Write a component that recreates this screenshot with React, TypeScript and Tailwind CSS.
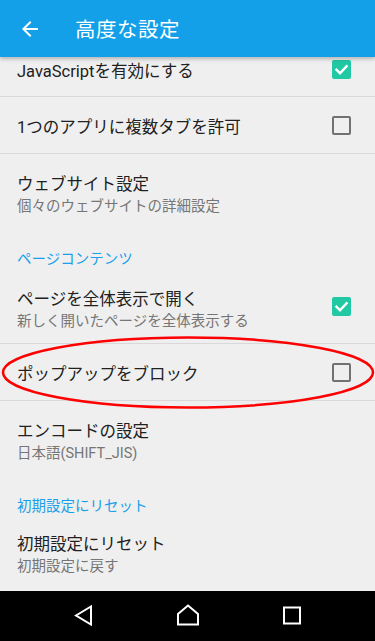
import React from "react";

const font = { fontFamily: 'Roboto, "Noto Sans CJK JP", sans-serif' };

function Checkbox({ checked }: { checked: boolean }) {
  if (checked) {
    return (
      <div className="w-[19px] h-[19px] rounded-[2px] bg-[#21c8a4] flex items-center justify-center">
        <svg viewBox="0 0 19 19" className="w-[19px] h-[19px]">
          <path
            d="M4.5 9.8 L8 13.2 L14.6 6.2"
            fill="none"
            stroke="#fff"
            strokeWidth="2.4"
            strokeLinecap="square"
          />
        </svg>
      </div>
    );
  }
  return (
    <div className="w-[19px] h-[19px] rounded-[2px] border-2 border-[#717171]" />
  );
}

function Row({
  title,
  sub,
  checked,
  divider = true,
  className = "",
  children,
}: {
  title: string;
  sub?: string;
  checked?: boolean;
  divider?: boolean;
  className?: string;
  children?: React.ReactNode;
}) {
  return (
    <div
      className={`relative flex items-center pl-[17px] pr-[24px] ${
        sub ? "h-[75px]" : "h-[57px]"
      } ${divider ? "border-b border-[#d9d9d9]" : ""} ${className}`}
    >
      <div
        className={`flex-1 flex flex-col ${
          sub ? "self-start pt-[19px]" : "pt-[5px]"
        }`}
      >
        <span className="text-[16.5px] leading-[23px] text-[#212121]">{title}</span>
        {sub && (
          <span className="text-[14.5px] leading-[22px] text-[#767676]">{sub}</span>
        )}
      </div>
      {checked !== undefined && <Checkbox checked={checked} />}
      {children}
    </div>
  );
}

function Section({ label, h }: { label: string; h: string }) {
  return (
    <div className={`${h} pl-[17px] pt-[21px]`}>
      <span className="block text-[14.5px] leading-[20px] text-[#1aa0ea]">{label}</span>
    </div>
  );
}

export default function App() {
  return (
    <div className="w-[375px] h-[641px] bg-[#efefef] flex flex-col overflow-hidden" style={font}>
      <div className="relative z-10 h-[57px] bg-[#149fe9] flex items-center shadow-[0_2px_4px_rgba(0,0,0,0.25)] shrink-0">
        <svg viewBox="0 0 24 24" className="w-6 h-6 ml-[18px]">
          <path
            d="M20 11H7.83l5.59-5.59L12 4l-8 8 8 8 1.41-1.41L7.83 13H20v-2z"
            fill="#fff"
          />
        </svg>
        <span className="ml-[33px] pt-[3px] text-[20.5px] text-white tracking-[0.5px]">高度な設定</span>
      </div>

      <div className="flex-1 overflow-hidden">
        <Row title="JavaScriptを有効にする" checked className="-mt-[17px] pt-[2px]" />
        <Row title="1つのアプリに複数タブを許可" checked={false} />
        <Row title="ウェブサイト設定" sub="個々のウェブサイトの詳細設定" divider={false} />
        <Section label="ページコンテンツ" h="h-[40px]" />
        <Row title="ページを全体表示で開く" sub="新しく開いたページを全体表示する" checked />
        <Row title="ポップアップをブロック" checked={false}>
          <svg
            className="absolute left-0 -top-[8px] w-[375px] h-[74px] overflow-visible pointer-events-none"
            viewBox="0 0 375 74"
          >
            <ellipse cx="188" cy="36.5" rx="185" ry="35" fill="none" stroke="#ff0000" strokeWidth="2.5" />
          </svg>
        </Row>
        <Row title="エンコードの設定" sub="日本語(SHIFT_JIS)" divider={false} />
        <Section label="初期設定にリセット" h="h-[38px]" />
        <Row title="初期設定にリセット" sub="初期設定に戻す" divider={false} />
      </div>

      <div className="h-[50px] bg-black flex items-center justify-center gap-[80px] shrink-0">
        <svg viewBox="0 0 24 24" className="w-6 h-6">
          <path d="M4 11.5 L19 2.5 L19 20.5 Z" fill="none" stroke="#fff" strokeWidth="2" strokeLinejoin="miter" />
        </svg>
        <svg viewBox="0 0 24 24" className="w-6 h-6">
          <path d="M12 1.5 L22 10 L22 20.5 L2 20.5 L2 10 Z" fill="none" stroke="#fff" strokeWidth="2" />
        </svg>
        <svg viewBox="0 0 24 24" className="w-6 h-6">
          <rect x="4" y="3.5" width="16" height="16" fill="none" stroke="#fff" strokeWidth="2" />
        </svg>
      </div>
    </div>
  );
}
